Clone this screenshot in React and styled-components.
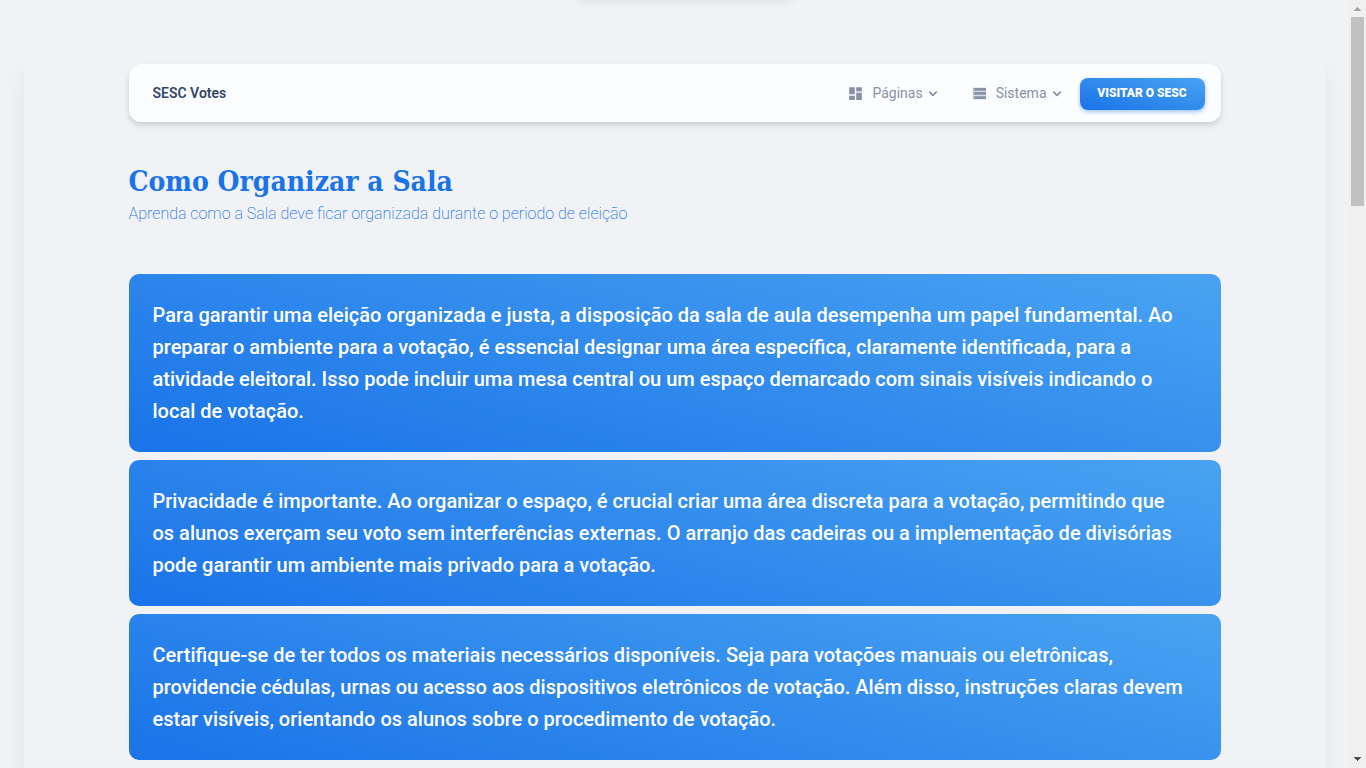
import React from "react";
import styled, { createGlobalStyle } from "styled-components";
import { MdDashboard } from "react-icons/md";

const GlobalStyle = createGlobalStyle`
  * { box-sizing: border-box; }
  body {
    margin: 0;
    background: #f0f2f5;
    font-family: Roboto, "Liberation Sans", sans-serif;
    color: #344767;
  }
`;

const Shell = styled.div`
  display: flex;
  height: 100vh;
  overflow: hidden;
`;

const Viewport = styled.div`
  position: relative;
  flex: 1;
  min-width: 0;
  overflow: auto;
  scrollbar-width: none;
`;

const HiddenToast = styled.div`
  position: absolute;
  bottom: 100%;
  left: 50%;
  width: 220px;
  height: 40px;
  margin-left: -100px;
  border-radius: 8px;
  box-shadow: 0 0 10px rgba(0, 0, 0, 0.1);
`;

const Panel = styled.main`
  margin: 48px 24px 0;
  padding: 16px 0 48px;
  border-radius: 12px;
  background: #f0f2f5;
  box-shadow: 0 20px 27px rgba(0, 0, 0, 0.05);
`;

const Container = styled.div`
  max-width: 1140px;
  margin: 0 auto;
  padding: 0 24px;
`;

const Navbar = styled.nav`
  display: flex;
  align-items: center;
  height: 58px;
  padding: 0 16px 0 24px;
  border-radius: 12px;
  background: #fcfdff;
  box-shadow: 0 4px 6px rgba(0, 0, 0, 0.1), 0 2px 4px rgba(0, 0, 0, 0.06);
`;

const Brand = styled.a`
  margin-right: auto;
  color: #344767;
  font-size: 14px;
  font-weight: 600;
  line-height: 24px;
  text-decoration: none;
`;

const MenuButton = styled.button`
  display: flex;
  align-items: center;
  margin-right: ${(p) => p.$gap};
  padding: 0;
  border: 0;
  background: none;
  color: #8792a6;
  font: 400 14px/24px Roboto, "Liberation Sans", sans-serif;
  cursor: pointer;

  span { margin: 0 4px 0 8px; }
`;

const VisitLink = styled.a`
  display: flex;
  align-items: center;
  justify-content: center;
  min-width: 125px;
  height: 32px;
  margin-top: 2px;
  padding: 0 16px 2px;
  border-radius: 8px;
  background: linear-gradient(195deg, #49a3f1, #1a73e8);
  box-shadow: 0 2px 4px rgba(26, 115, 232, 0.4);
  color: #fff;
  font-size: 12px;
  font-weight: 900;
  line-height: 16px;
  text-decoration: none;
  text-transform: uppercase;
  white-space: nowrap;
`;

const Header = styled.header`
  padding: 40px 0 48px;
`;

const Title = styled.h1`
  margin: 0;
  color: #1a73e8;
  font-family: "Roboto Slab", "DejaVu Serif Condensed", "DejaVu Serif", serif;
  font-size: 28px;
  font-weight: 700;
  line-height: 40px;
`;

const Lead = styled.p`
  margin: 0;
  color: #1a73e8;
  font-size: 16px;
  font-weight: 200;
  line-height: 24px;
`;

const TipList = styled.div`
  display: grid;
  gap: 8px;
`;

const Tip = styled.p`
  margin: 0;
  padding: 25px 34px 25px 24px;
  border-radius: 10px;
  background: linear-gradient(195deg, #49a3f1, #1a73e8);
  color: #fff;
  font-size: 20px;
  font-weight: 500;
  line-height: 32px;
`;

const ScrollTrack = styled.div`
  display: flex;
  flex-direction: column;
  align-items: center;
  width: 17px;
  background: #f0f0f0;
`;

const ScrollThumb = styled.div`
  width: 13px;
  height: 189px;
  margin-bottom: auto;
  background: #c1c1c1;
`;

const ScrollArrow = ({ color, d }) => (
  <svg width="17" height="17" viewBox="0 0 17 17" fill={color} shapeRendering="crispEdges" aria-hidden="true">
    <path d={d} />
  </svg>
);

const Chevron = () => (
  <svg width="12" height="12" viewBox="0 0 12 12" fill="none" stroke="currentColor" strokeWidth="1.8" strokeLinecap="round" strokeLinejoin="round" aria-hidden="true">
    <path d="M2.8 5.2 6 8.400l3.2-3.2" />
  </svg>
);

const StorageIcon = () => (
  <svg width="17" height="17" viewBox="0 0 17 17" fill="currentColor" aria-hidden="true">
    <path opacity=".3" d="M2 2.500h13v12H2z" />
    <path d="M2.500 3h12.500v2.700H2.500zM2.500 7.100h12.500v2.700H2.500zM2.500 11.200h12.500v2.700H2.500z" />
    <path fill="#fcfdff" opacity=".45" d="M3 4h1v1H3zM3 8h1v1H3zM3 12h1v1H3z" />
  </svg>
);

const tips = [
  "Para garantir uma eleição organizada e justa, a disposição da sala de aula desempenha um papel fundamental. Ao preparar o ambiente para a votação, é essencial designar uma área específica, claramente identificada, para a atividade eleitoral. Isso pode incluir uma mesa central ou um espaço demarcado com sinais visíveis indicando o local de votação.",
  "Privacidade é importante. Ao organizar o espaço, é crucial criar uma área discreta para a votação, permitindo que os alunos exerçam seu voto sem interferências externas. O arranjo das cadeiras ou a implementação de divisórias pode garantir um ambiente mais privado para a votação.",
  "Certifique-se de ter todos os materiais necessários disponíveis. Seja para votações manuais ou eletrônicas, providencie cédulas, urnas ou acesso aos dispositivos eletrônicos de votação. Além disso, instruções claras devem estar visíveis, orientando os alunos sobre o procedimento de votação.",
];

export default function App() {
  return (
    <Shell>
      <GlobalStyle />
      <Viewport>
        <HiddenToast />
        <Panel>
          <Container>
            <Navbar>
              <Brand href="#">SESC Votes</Brand>
              <MenuButton type="button" $gap="32px">
                <MdDashboard size={17} />
                <span>Páginas</span>
                <Chevron />
              </MenuButton>
              <MenuButton type="button" $gap="17px">
                <StorageIcon />
                <span>Sistema</span>
                <Chevron />
              </MenuButton>
              <VisitLink href="#">Visitar o SESC</VisitLink>
            </Navbar>
            <Header>
              <Title>Como Organizar a Sala</Title>
              <Lead>Aprenda como a Sala deve ficar organizada durante o periodo de eleição</Lead>
            </Header>
            <TipList>
              {tips.map((text) => (
                <Tip key={text}>{text}</Tip>
              ))}
            </TipList>
          </Container>
        </Panel>
      </Viewport>
      <ScrollTrack>
        <ScrollArrow color="#a3a3a3" d="M8 7h1v1h1v1h1v1h1v1H5v-1h1V9h1V8h1z" />
        <ScrollThumb />
        <ScrollArrow color="#505050" d="M5 6h7v1h-1v1h-1v1H9v1H8V9H7V8H6V7H5z" />
      </ScrollTrack>
    </Shell>
  );
}
